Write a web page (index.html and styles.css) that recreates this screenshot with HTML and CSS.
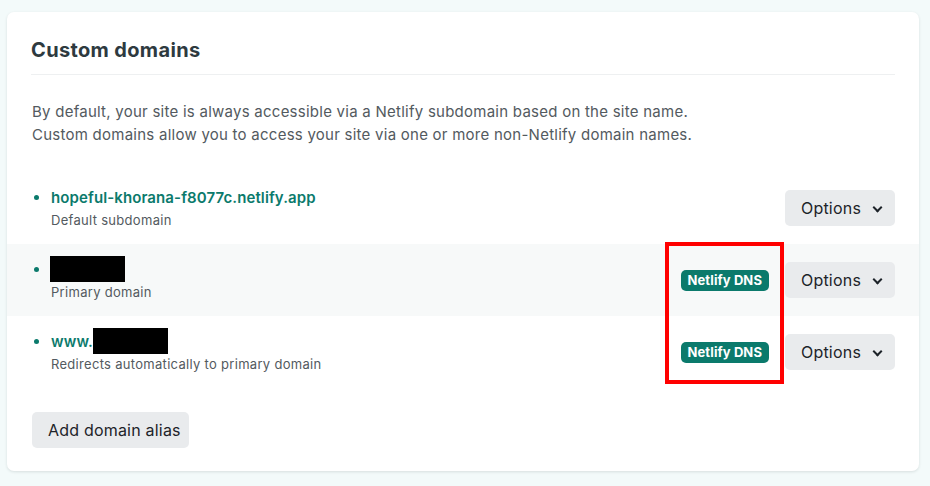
FILE: index.html
```html
<!DOCTYPE html>
<html>
<head>
	<title>Custom domains</title>
	<link rel="stylesheet" href="styles.css">
</head>
<body>
<div class="card">
	<h2 class="card-title">Custom domains</h2>
	<p class="intro">
		By default, your site is always accessible via a Netlify subdomain based on the site name.<br>
		Custom domains allow you to access your site via one or more non-Netlify domain names.
	</p>
	<ul class="domains">
		<li class="domain">
			<div class="domain-info">
				<a class="domain-name" href="#">hopeful-khorana-f8077c.netlify.app</a>
				<div class="domain-note">Default subdomain</div>
			</div>
			<button class="btn options">Options <span class="chev"></span></button>
		</li>
		<li class="domain shaded">
			<div class="domain-info">
				<a class="domain-name" href="#"><span class="redact"></span></a>
				<div class="domain-note">Primary domain</div>
			</div>
			<span class="badge">Netlify DNS</span>
			<button class="btn options">Options <span class="chev"></span></button>
		</li>
		<li class="domain">
			<div class="domain-info">
				<a class="domain-name" href="#">www.<span class="redact"></span></a>
				<div class="domain-note">Redirects automatically to primary domain</div>
			</div>
			<span class="badge">Netlify DNS</span>
			<button class="btn options">Options <span class="chev"></span></button>
		</li>
	</ul>
	<button class="btn add">Add domain alias</button>
	<div class="callout"></div>
</div>
</body>
</html>
```

FILE: styles.css
```css
body {
	margin: 0;
	background: #f3fafa;
	font-family: Inter, "Noto Sans", sans-serif;
	padding: 12px 11px 15px 7px;
}
.card {
	position: relative;
	background: #fff;
	border-radius: 7px;
	box-shadow: 0 1px 3px rgba(14, 30, 37, 0.12);
	padding: 26px 0 23px;
}
.card-title {
	margin: 0 24px;
	padding-bottom: 12px;
	border-bottom: 1px solid #eef0f1;
	font-size: 20px;
	line-height: 24px;
	font-weight: 700;
	color: #2e3a3f;
	letter-spacing: 0.35px;
}
.intro {
	margin: 25px 24px 26px 25px;
	font-size: 15px;
	line-height: 23px;
	color: #535a60;
	letter-spacing: 0.25px;
}
.domains {
	list-style: none;
	margin: 0;
	padding: 0;
}
.domain {
	display: flex;
	align-items: center;
	height: 72px;
	padding: 0 24px 0 27px;
}
.domain.shaded {
	background: #f7f9f9;
}
.domain-info {
	flex: 1;
	position: relative;
	padding-left: 17px;
	margin-top: -4px;
}
.domain-info:before {
	content: "";
	position: absolute;
	left: 0;
	top: 10px;
	width: 5px;
	height: 5px;
	border-radius: 50%;
	background: #0b7a6c;
}
.domain-name {
	display: flex;
	align-items: center;
	height: 25px;
	font-size: 15px;
	font-weight: 600;
	color: #0b7a6c;
	text-decoration: none;
	letter-spacing: 0.1px;
}
.domain-note {
	font-size: 13px;
	color: #535a60;
	margin-top: 2px;
	letter-spacing: 0.3px;
}
.redact {
	display: inline-block;
	width: 75px;
	height: 26px;
	background: #000;
}
.shaded .redact {
	margin-left: -1px;
}
.badge {
	background: #0b7a6c;
	color: #fff;
	font-size: 13px;
	font-weight: 700;
	padding: 2px 7px 3px;
	border-radius: 5px;
	margin-right: 16px;
	letter-spacing: 0.1px;
}
.btn {
	font-family: inherit;
	border: none;
	background: #e9ebed;
	color: #1d2329;
	border-radius: 5px;
	font-size: 16px;
	height: 36px;
	cursor: pointer;
	white-space: nowrap;
	text-align: left;
	letter-spacing: 0.2px;
}
.options {
	width: 110px;
	padding: 0 0 0 16px;
}
.chev {
	display: inline-block;
	width: 5px;
	height: 5px;
	border-right: 2px solid #1d2329;
	border-bottom: 2px solid #1d2329;
	transform: rotate(45deg);
	margin: 0 0 3px 8px;
}
.add {
	margin: 24px 0 0 25px;
	padding: 0 16px;
	width: 157px;
}
.callout {
	position: absolute;
	left: 658px;
	top: 230px;
	width: 111px;
	height: 134px;
	border: 4px solid #f00;
}
```
